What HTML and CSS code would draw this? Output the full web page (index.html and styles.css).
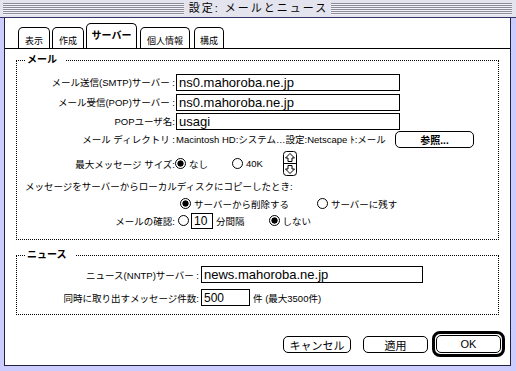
FILE: index.html
```html
<!DOCTYPE html>
<html>

<head>
  <meta charset="UTF-8" />
  <title>設定: メールとニュース</title>
  <link rel="stylesheet" href="styles.css">
</head>

<body>
  <div class="window">
    <div class="titlebar">
      <span class="stripes"></span>
      <span class="title">設定: メールとニュース</span>
      <span class="stripes"></span>
    </div>
    <div class="frame">
      <div class="panel">
        <div class="tabs">
          <div class="tab">表示</div>
          <div class="tab">作成</div>
          <div class="tab active">サーバー</div>
          <div class="tab">個人情報</div>
          <div class="tab">構成</div>
        </div>

        <fieldset class="group mail">
          <legend>メール</legend>
          <div class="row r1">
            <span class="label">メール送信(SMTP)サーバー :</span>
            <input class="field wide" type="text" value="ns0.mahoroba.ne.jp">
          </div>
          <div class="row r2">
            <span class="label">メール受信(POP)サーバー :</span>
            <input class="field wide" type="text" value="ns0.mahoroba.ne.jp">
          </div>
          <div class="row r3">
            <span class="label">POPユーザ名:</span>
            <input class="field wide" type="text" value="usagi">
          </div>
          <div class="row r4">
            <span class="label">メール ディレクトリ :</span>
            <span class="path">Macintosh HD:システム…設定:Netscape ﾄ:メール</span>
            <button class="btn browse">参照...</button>
          </div>
          <div class="row r5">
            <span class="label">最大メッセージ サイズ:</span>
            <span class="radio on"></span><span class="opt">なし</span>
            <span class="radio second"></span><span class="opt">40K</span>
            <svg class="stepper" width="14" height="25" viewBox="0 0 14 25">
              <rect x="0.5" y="0.5" width="13" height="24" rx="3" fill="#fff" stroke="#000" />
              <line x1="1" y1="12.5" x2="13" y2="12.5" stroke="#000" />
              <polygon points="7,2.5 11.5,7 9,7 9,10.5 5,10.5 5,7 2.5,7" fill="none" stroke="#000" />
              <polygon points="7,22.5 11.5,18 9,18 9,14.5 5,14.5 5,18 2.5,18" fill="none" stroke="#000" />
            </svg>
          </div>
          <div class="row r6">メッセージをサーバーからローカルディスクにコピーしたとき:</div>
          <div class="row r7">
            <span class="radio on"></span><span class="opt">サーバーから削除する</span>
            <span class="radio keep"></span><span class="opt">サーバーに残す</span>
          </div>
          <div class="row r8">
            <span class="label">メールの確認:</span>
            <span class="radio"></span>
            <input class="field minutes" type="text" value="10">
            <span class="opt">分間隔</span>
            <span class="radio on never"></span><span class="opt">しない</span>
          </div>
        </fieldset>

        <fieldset class="group news">
          <legend>ニュース</legend>
          <div class="row n1">
            <span class="label">ニュース(NNTP)サーバー :</span>
            <input class="field news-host" type="text" value="news.mahoroba.ne.jp">
          </div>
          <div class="row n2">
            <span class="label">同時に取り出すメッセージ件数:</span>
            <input class="field count" type="text" value="500">
            <span class="opt">件 (最大3500件)</span>
          </div>
        </fieldset>

        <div class="actions">
          <button class="btn cancel">キャンセル</button>
          <button class="btn apply">適用</button>
          <button class="btn ok"><span>OK</span></button>
        </div>
      </div>
    </div>
  </div>
</body>

</html>
```

FILE: styles.css
```css
body {
  margin: 0;
  font-family: "Liberation Sans", "Noto Sans CJK JP", sans-serif;
  font-size: 9.5px;
  color: #000;
  background: #fff;
}

.window {
  width: 516px;
  height: 371px;
  background: #ccccff;
  display: flex;
  flex-direction: column;
}

.titlebar {
  height: 17px;
  border-bottom: 1px solid #333366;
  background: #e4e4ee;
  display: flex;
  align-items: center;
  padding: 0 4px 0 3px;
}

.stripes {
  flex: 1;
  height: 12px;
  background: repeating-linear-gradient(to bottom, #8c8c99 0 1px, #f2f2f8 1px 2px);
}

.title {
  padding: 0 3px 0 5px;
  font-size: 11px;
  letter-spacing: 2px;
  line-height: 17px;
}

.frame {
  flex: 1;
  padding: 0 5px 5px 4px;
  display: flex;
}

.panel {
  flex: 1;
  background: #fff;
  border: 1px solid #222244;
  border-top: none;
  display: flex;
  flex-direction: column;
}

/* tabs */
.tabs {
  height: 30px;
  border-bottom: 1px solid #000;
  display: flex;
  align-items: flex-end;
  padding-left: 13px;
  gap: 2px;
}

.tab {
  height: 20px;
  padding: 0 5px;
  border: 1px solid #000;
  border-bottom: none;
  border-radius: 5px 5px 0 0;
  font-size: 9px;
  line-height: 27px;
  text-align: center;
  white-space: nowrap;
}

.tab:nth-child(1),
.tab:nth-child(2) {
  width: 20px;
}

.tab:nth-child(4) {
  width: 38px;
  margin-left: 1px;
}

.tab:nth-child(5) {
  width: 18px;
  margin-left: 2px;
}

.tab.active {
  height: 24px;
  width: 45px;
  padding: 0 2px;
  font-weight: bold;
  font-size: 10px;
  line-height: 24px;
}

/* groups */
.group {
  margin: 5px 11px 0;
  padding: 0 0 10px;
  border: 1px dotted #000;
  min-width: 0;
}

.group legend {
  margin-left: 8px;
  padding: 0 9px 0 2px;
  font-weight: bold;
  font-size: 10px;
  line-height: 12px;
}

.mail {
  padding-top: 6px;
}

.news {
  margin-top: 9px;
  padding-top: 2px;
  padding-bottom: 5px;
}

.row {
  display: flex;
  align-items: center;
  white-space: nowrap;
}

.label {
  width: 158px;
  flex-shrink: 0;
  text-align: right;
}

.r1,
.r2 {
  height: 20px;
}

.r3,
.r4 {
  height: 18px;
}

.r5 {
  height: 25px;
  margin-top: 3px;
}

.r6 {
  height: 18px;
  margin-top: 1px;
  padding-left: 8px;
}

.r7 {
  height: 17px;
  padding-left: 163px;
}

.r8 {
  height: 17px;
}

.field {
  box-sizing: border-box;
  height: 17px;
  margin: 0;
  padding: 0 2px;
  border: 1px solid #000;
  font-family: "Liberation Sans", sans-serif;
  font-size: 13px;
  color: #000;
  background: #fff;
  outline: none;
}

.wide {
  width: 224px;
  margin-left: 1px;
}

.path {
  margin-left: 1px;
  width: 219px;
}

.btn {
  box-sizing: border-box;
  height: 17px;
  margin: 0;
  padding: 0;
  border: 1px solid #000;
  border-radius: 5px;
  background: #fff;
  font-family: "Liberation Sans", "Noto Sans CJK JP", sans-serif;
  font-size: 11px;
  color: #000;
}

.browse {
  width: 79px;
  font-weight: bold;
  font-size: 10px;
}

.radio {
  box-sizing: border-box;
  width: 11px;
  height: 11px;
  border: 1px solid #000;
  border-radius: 50%;
  flex-shrink: 0;
  background: #fff;
}

.radio.on {
  background: radial-gradient(circle, #000 0 2.8px, #fff 3.4px);
}

.opt {
  margin-left: 3px;
}

.r5 .radio {
  margin-left: 0;
}

.r5 .second {
  margin-left: 24px;
}

.stepper {
  margin-left: 20px;
}

.r7 .keep {
  margin-left: 28px;
}

.r8 .radio {
  margin-left: 3px;
}

.minutes {
  width: 22px;
  height: 16px;
  margin-left: 2px;
  font-size: 12px;
}

.r8 .never {
  margin-left: 24px;
}

.n1,
.n2 {
  height: 23px;
}

.news .label {
  width: 182px;
}

.news-host {
  width: 222px;
  margin-left: 2px;
}

.count {
  width: 49px;
  margin-left: 2px;
  font-size: 12px;
}

/* buttons */
.actions {
  margin-top: auto;
  display: flex;
  align-items: center;
  justify-content: flex-end;
  padding: 0 5px 8px 0;
}

.cancel {
  width: 68px;
}

.apply {
  width: 65px;
  margin-left: 12px;
}

.ok {
  width: 73px;
  height: 26px;
  margin-left: 4px;
  border: 3px solid #000;
  border-radius: 8px;
  padding: 1px;
  display: flex;
}

.ok span {
  flex: 1;
  border: 1px solid #000;
  border-radius: 5px;
  line-height: 16px;
}
```
